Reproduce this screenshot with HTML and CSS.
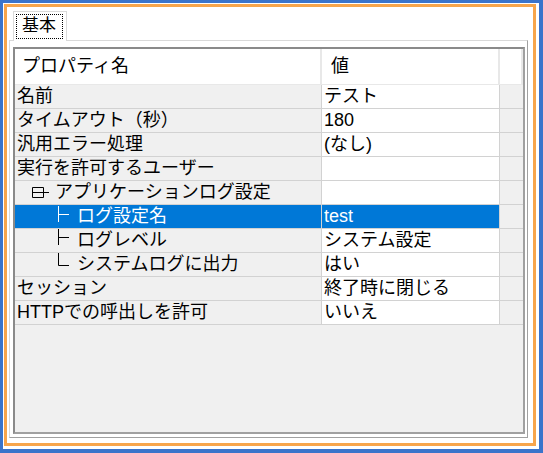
FILE: index.html
```html
<!DOCTYPE html>
<html lang="ja">
<head>
    <meta charset="UTF-8">
    <title>プロパティ</title>
    <link rel="stylesheet" href="styles.css">
</head>
<body>
    <div id="frame">
        <div id="window">
            <div class="tabs">
                <div class="tab"><span class="focus">基本</span></div>
            </div>
            <div class="panel">
                <div class="grid">
                    <div class="row head">
                        <div class="cell name">プロパティ名</div>
                        <div class="cell value">値</div>
                        <div class="cell end"></div>
                    </div>
                    <div class="row">
                        <div class="cell name">名前</div>
                        <div class="cell value">テスト</div>
                        <div class="cell end"></div>
                    </div>
                    <div class="row">
                        <div class="cell name">タイムアウト（秒）</div>
                        <div class="cell value">180</div>
                        <div class="cell end"></div>
                    </div>
                    <div class="row">
                        <div class="cell name">汎用エラー処理</div>
                        <div class="cell value">(なし)</div>
                        <div class="cell end"></div>
                    </div>
                    <div class="row">
                        <div class="cell name">実行を許可するユーザー</div>
                        <div class="cell value"></div>
                        <div class="cell end"></div>
                    </div>
                    <div class="row">
                        <div class="cell name">
                            <svg class="toggle" width="17" height="23" viewBox="0 0 17 23">
                                <path d="M0.5 6.5 H11.5 V16.5 H0.5 Z M0.5 11.5 H17" fill="none" stroke="currentColor"/>
                            </svg><span class="label group">アプリケーションログ設定</span>
                        </div>
                        <div class="cell value"></div>
                        <div class="cell end"></div>
                    </div>
                    <div class="row selected">
                        <div class="cell name">
                            <svg class="branch" width="12" height="23" viewBox="0 0 12 23">
                                <path d="M0.5 1 V17 M0.5 9.5 H11" fill="none" stroke="currentColor"/>
                            </svg><span class="label">ログ設定名</span>
                        </div>
                        <div class="cell value">test</div>
                        <div class="cell end"></div>
                    </div>
                    <div class="row">
                        <div class="cell name">
                            <svg class="branch" width="12" height="23" viewBox="0 0 12 23">
                                <path d="M0.5 0 V16 M0.5 8.5 H11" fill="none" stroke="currentColor"/>
                            </svg><span class="label">ログレベル</span>
                        </div>
                        <div class="cell value">システム設定</div>
                        <div class="cell end"></div>
                    </div>
                    <div class="row">
                        <div class="cell name">
                            <svg class="branch" width="12" height="23" viewBox="0 0 12 23">
                                <path d="M0.5 0 V12.5 H11" fill="none" stroke="currentColor"/>
                            </svg><span class="label">システムログに出力</span>
                        </div>
                        <div class="cell value">はい</div>
                        <div class="cell end"></div>
                    </div>
                    <div class="row">
                        <div class="cell name">セッション</div>
                        <div class="cell value">終了時に閉じる</div>
                        <div class="cell end"></div>
                    </div>
                    <div class="row">
                        <div class="cell name">HTTPでの呼出しを許可</div>
                        <div class="cell value">いいえ</div>
                        <div class="cell end"></div>
                    </div>
                    <div class="fill"></div>
                </div>
            </div>
        </div>
    </div>
</body>
</html>
```

FILE: styles.css
```css
body {
    margin: 0;
    font-family: "Liberation Sans", "Noto Sans CJK JP", sans-serif;
    font-size: 18px;
    color: #000;
    background: #fff;
}

#frame {
    box-sizing: border-box;
    width: 543px;
    height: 453px;
    border-style: solid;
    border-color: #3a74cb;
    border-width: 3px 4px 4px 3px;
    padding: 1px 3px 3px 1px;
    background: #fff;
}

#window {
    box-sizing: border-box;
    height: 100%;
    border: 3px solid #f7a54b;
    padding: 4px 5px 5px 2px;
    display: flex;
    flex-direction: column;
}

.tabs {
    display: flex;
    height: 29px;
    padding-left: 4px;
}

.tab {
    box-sizing: border-box;
    width: 54px;
    height: 30px;
    border: 1px solid #d9d9d9;
    border-bottom: none;
    background: #fff;
    padding: 2px 3px 0 2px;
    position: relative;
    z-index: 1;
}

.focus {
    display: block;
    box-sizing: border-box;
    height: 25px;
    border: 1px dotted #000;
    padding-left: 5px;
    font-size: 17px;
    line-height: 22px;
}

.panel {
    flex: 1;
    display: flex;
    box-sizing: border-box;
    border: 1px solid #d9d9d9;
    border-bottom-color: #a0a0a0;
    border-right-color: #a0a0a0;
    padding: 6px 2px 3px 3px;
    background: #fff;
}

.grid {
    flex: 1;
    display: flex;
    flex-direction: column;
    border: 2px solid #8a8a8a;
    border-right-color: #a0a0a0;
    border-bottom-color: #a0a0a0;
    background: #f0f0f0;
}

.row {
    display: grid;
    grid-template-columns: 307px 178px 1fr;
    box-sizing: border-box;
    height: 24px;
    border-bottom: 1px solid #d2d2d2;
}

.cell {
    box-sizing: border-box;
    padding-left: 2px;
    line-height: 23px;
    white-space: nowrap;
    overflow: hidden;
    display: flex;
    align-items: flex-start;
}

.name {
    border-right: 1px solid #d2d2d2;
    background: #f0f0f0;
}

.value {
    border-right: 1px solid #d2d2d2;
    background: #fff;
}

.end {
    background: #f0f0f0;
}

.head {
    height: 36px;
    border-bottom-color: #e8e8e8;
}

.head .cell {
    background: #fff;
    line-height: 35px;
    border-right: 2px solid #e8e8e8;
}

.head .name {
    padding-left: 7px;
}

.head .value {
    padding-left: 9px;
}

.toggle {
    margin-left: 15px;
    flex: none;
}

.branch {
    margin-left: 41px;
    flex: none;
}

.label {
    margin-left: 7px;
}

.label.group {
    margin-left: 6px;
}

.selected .name,
.selected .value {
    background: #0078d7;
    color: #fff;
}

.fill {
    flex: 1;
}
```
